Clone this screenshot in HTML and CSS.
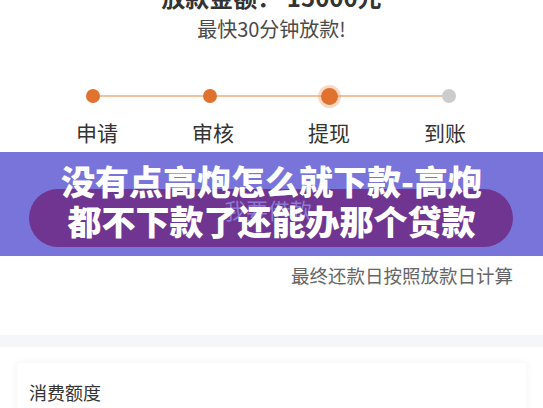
FILE: index.html
```html
<!DOCTYPE html>
<html lang="zh-CN">
<head>
<meta charset="utf-8">
<title>放款进度</title>
<link rel="stylesheet" href="styles.css">
</head>
<body>
<div class="page">
  <section class="summary">
    <h1 class="amount">放款金额： 15000元</h1>
    <p class="speed">最快30分钟放款!</p>
    <div class="steps-track">
      <span class="dot done"></span>
      <span class="dot done"></span>
      <span class="dot current"></span>
      <span class="dot todo"></span>
    </div>
    <div class="steps-labels">
      <span>申请</span>
      <span>审核</span>
      <span>提现</span>
      <span>到账</span>
    </div>
  </section>

  <section class="band">
    <div class="pill">我要借款</div>
    <h2 class="headline">没有点高炮怎么就下款-高炮<br>都不下款了还能办那个贷款</h2>
  </section>

  <p class="note">最终还款日按照放款日计算</p>

  <div class="divider"></div>

  <section class="quota">
    <div class="card">
      <div class="card-title">消费额度</div>
    </div>
  </section>
</div>
</body>
</html>
```

FILE: styles.css
```css
* {
  box-sizing: border-box;
}

html, body {
  margin: 0;
  padding: 0;
  background: #ffffff;
}

body {
  font-family: "Noto Sans CJK SC", "Noto Sans", sans-serif;
  color: #333333;
  overflow: hidden;
}

.page {
  width: 543px;
  display: flex;
  flex-direction: column;
}

.summary {
  display: flex;
  flex-direction: column;
  align-items: stretch;
  margin-top: -18px;
}

.amount {
  margin: 0;
  font-size: 24px;
  line-height: 30px;
  font-weight: 700;
  color: #333333;
  text-align: center;
  white-space: pre;
}

.speed {
  margin: 3px 0 0;
  font-size: 20px;
  line-height: 28px;
  color: #4a4a4a;
  text-align: center;
}

.steps-track {
  position: relative;
  margin: 43px 0 0 86px;
  width: 370px;
  height: 20px;
  display: flex;
  justify-content: space-between;
  align-items: center;
}

.steps-track::before {
  content: "";
  position: absolute;
  left: 7px;
  right: 7px;
  top: 9px;
  height: 2px;
  background: #f3c29c;
}

.dot {
  position: relative;
  width: 14px;
  height: 14px;
  border-radius: 50%;
  background: #e0712f;
}

.dot.current {
  width: 17px;
  height: 17px;
  margin-right: 1px;
  box-shadow: 0 0 0 3px rgba(236, 150, 95, 0.35);
}

.dot.todo {
  background: #cccccc;
}

.steps-labels {
  margin: 11px 0 0;
  padding-left: 39px;
  display: grid;
  grid-template-columns: repeat(4, 116px);
  font-size: 21px;
  line-height: 30px;
  color: #333333;
  text-align: center;
}

.band {
  position: relative;
  margin-top: 5px;
  height: 104px;
  background: #7874d9;
  padding: 37px 30px 0 29px;
}

.pill {
  height: 58px;
  border-radius: 29px;
  background: #6f3590;
  color: #8a7ad6;
  font-size: 22px;
  line-height: 40px;
  text-align: center;
  padding-right: 6px;
}

.headline {
  position: absolute;
  left: 0;
  right: 0;
  top: 9px;
  margin: 0;
  font-size: 34px;
  line-height: 40px;
  font-weight: 900;
  color: #ffffff;
  text-align: center;
}

.note {
  margin: 6px 0 0;
  padding-right: 30px;
  font-size: 18.5px;
  line-height: 26px;
  color: #666666;
  text-align: right;
}

.divider {
  margin-top: 47px;
  height: 12px;
  background: #f5f6f8;
}

.quota {
  padding: 16px 17px 0;
}

.card {
  background: #ffffff;
  border-radius: 4px;
  box-shadow: 0 0 8px rgba(0, 0, 0, 0.06);
  padding: 16px 12px 20px;
  height: 80px;
}

.card-title {
  font-size: 18px;
  line-height: 26px;
  color: #333333;
}
```
